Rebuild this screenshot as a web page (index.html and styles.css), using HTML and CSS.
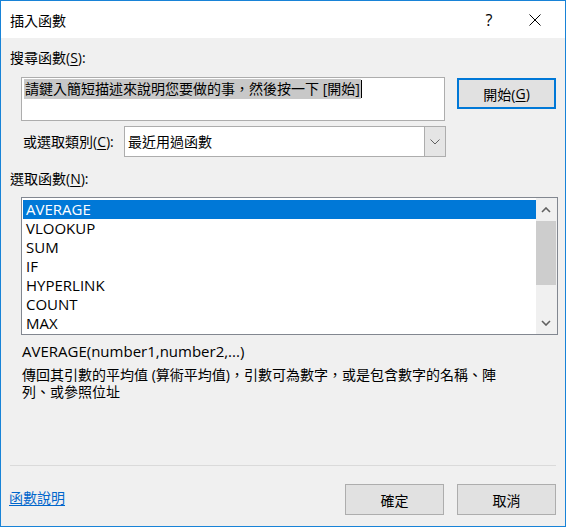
FILE: index.html
```html
<!DOCTYPE html>
<html lang="zh-Hant">
<head>
<meta charset="utf-8">
<title>插入函數</title>
<link rel="stylesheet" href="styles.css">
</head>
<body>
<div class="dialog">
  <div class="titlebar">
    <span class="title">插入函數</span>
    <span class="help">?</span>
    <span class="close">
      <svg width="12" height="12" viewBox="0 0 12 12"><path d="M0.5 0.5 L11.5 11.5 M11.5 0.5 L0.5 11.5" stroke="#000" stroke-width="1" fill="none"/></svg>
    </span>
  </div>
  <div class="content">
    <div class="label label-search">搜尋函數(<u>S</u>):</div>
    <div class="search-row">
      <div class="search-box"><span class="sel">請鍵入簡短描述來說明您要做的事，然後按一下 [開始]</span><span class="caret"></span></div>
      <div class="btn btn-default">開始(<u>G</u>)</div>
    </div>
    <div class="cat-row">
      <div class="label cat-label">或選取類別(<u>C</u>):</div>
      <div class="combo">
        <div class="combo-value">最近用過函數</div>
        <div class="combo-btn">
          <svg width="10" height="6" viewBox="0 0 10 6"><path d="M0.5 0.5 L5 5 L9.5 0.5" stroke="#606060" stroke-width="1" fill="none"/></svg>
        </div>
      </div>
    </div>
    <div class="label label-list">選取函數(<u>N</u>):</div>
    <div class="listbox">
      <div class="items">
        <div class="item selected">AVERAGE</div>
        <div class="item">VLOOKUP</div>
        <div class="item">SUM</div>
        <div class="item">IF</div>
        <div class="item">HYPERLINK</div>
        <div class="item">COUNT</div>
        <div class="item">MAX</div>
      </div>
      <div class="scrollbar">
        <div class="arrow">
          <svg width="10" height="6" viewBox="0 0 10 6"><path d="M1 5 L5 1 L9 5" stroke="#606060" stroke-width="1.6" fill="none"/></svg>
        </div>
        <div class="thumb"></div>
        <div class="track"></div>
        <div class="arrow">
          <svg width="10" height="6" viewBox="0 0 10 6"><path d="M1 1 L5 5 L9 1" stroke="#606060" stroke-width="1.6" fill="none"/></svg>
        </div>
      </div>
    </div>
    <div class="signature">AVERAGE(number1,number2,...)</div>
    <div class="description">傳回其引數的平均值 (算術平均值)，引數可為數字，或是包含數字的名稱、陣列、或參照位址</div>
  </div>
  <div class="separator"></div>
  <div class="footer">
    <a class="link" href="#">函數說明</a>
    <div class="btn">確定</div>
    <div class="btn btn-cancel">取消</div>
  </div>
</div>
</body>
</html>
```

FILE: styles.css
```css
* { box-sizing: border-box; }
html, body { margin: 0; padding: 0; }
body {
  width: 566px;
  height: 527px;
  font-family: "Open Sans", "Noto Sans CJK TC", sans-serif;
  color: #000;
  background: #fff;
}
.dialog {
  width: 566px;
  height: 527px;
  border: 1px solid #1883d7;
  background: #f0f0f0;
  display: flex;
  flex-direction: column;
}
.titlebar {
  height: 37px;
  background: #fff;
  display: flex;
  align-items: center;
  padding-right: 7px;
  flex-shrink: 0;
}
.title {
  padding-left: 9px;
  font-size: 14px;
  flex: 1;
}
.help {
  width: 46px;
  text-align: center;
  font-size: 16px;
  line-height: 20px;
}
.close {
  width: 46px;
  height: 37px;
  display: flex;
  align-items: center;
  justify-content: center;
}
.close svg { display: block; }
.content {
  padding: 0 9px;
}
.label {
  font-size: 14px;
  line-height: 18px;
}
.label u { text-decoration-thickness: 1px; text-underline-offset: 2px; }
.label-search { margin-top: 11px; }
.search-row {
  display: flex;
  align-items: flex-start;
  margin-top: 10px;
}
.search-box {
  margin-left: 11px;
  width: 425px;
  height: 44px;
  background: #fff;
  border: 1px solid #adadad;
  padding: 1px 0 0 2px;
  font-size: 14px;
  line-height: 20px;
  display: flex;
  align-items: flex-start;
}
.sel {
  background: #c8c8c8;
  padding: 0 1px;
  white-space: nowrap;
}
.caret {
  width: 1px;
  height: 18px;
  margin-top: 1px;
  background: #000;
}
.btn {
  width: 99px;
  height: 31px;
  background: #e1e1e1;
  border: 1px solid #adadad;
  display: flex;
  align-items: center;
  justify-content: center;
  font-size: 14px;
}
.btn-default {
  margin-left: 12px;
  margin-top: 1px;
  border: 2px solid #0078d7;
}
.btn u { text-underline-offset: 2px; }
.cat-row {
  display: flex;
  align-items: center;
  margin-top: 5px;
}
.cat-label {
  margin-left: 13px;
  width: 101px;
  white-space: nowrap;
}
.combo {
  width: 322px;
  height: 31px;
  background: #fff;
  border: 1px solid #adadad;
  display: flex;
}
.combo-value {
  flex: 1;
  padding-left: 3px;
  font-size: 14px;
  line-height: 29px;
}
.combo-btn {
  width: 21px;
  background: #e5e5e5;
  border-left: 1px solid #adadad;
  display: flex;
  align-items: center;
  justify-content: center;
}
.combo-btn svg { display: block; }
.label-list { margin-top: 13px; }
.listbox {
  margin-top: 9px;
  margin-left: 11px;
  width: 537px;
  height: 138px;
  background: #fff;
  border: 1px solid #828790;
  display: flex;
}
.items {
  flex: 1;
  padding: 2px 0 0 1px;
}
.item {
  height: 19px;
  line-height: 19px;
  padding-left: 3px;
  font-size: 15px;
}
.item.selected {
  background: #0078d7;
  color: #fff;
}
.scrollbar {
  width: 21px;
  background: #f0f0f0;
  display: flex;
  flex-direction: column;
}
.arrow {
  height: 23px;
  display: flex;
  align-items: center;
  justify-content: center;
  padding-right: 1px;
}
.arrow svg { display: block; }
.thumb {
  height: 64px;
  background: #cdcdcd;
  margin-right: 1px;
}
.track { flex: 1; }
.signature {
  margin-top: 7px;
  margin-left: 12px;
  font-size: 15px;
  line-height: 18px;
}
.description {
  margin-top: 6px;
  margin-left: 12px;
  width: 478px;
  font-size: 14px;
  line-height: 17px;
}
.separator {
  margin: auto 9px 0;
  height: 1px;
  background: #dadada;
  flex-shrink: 0;
}
.footer {
  display: flex;
  align-items: center;
  padding: 18px 9px 11px 8px;
}
.link {
  font-size: 14px;
  color: #0066cc;
  text-decoration: underline;
  text-underline-offset: 2px;
  margin-right: auto;
  margin-bottom: 6px;
}
.btn-cancel { margin-left: 13px; }
```
